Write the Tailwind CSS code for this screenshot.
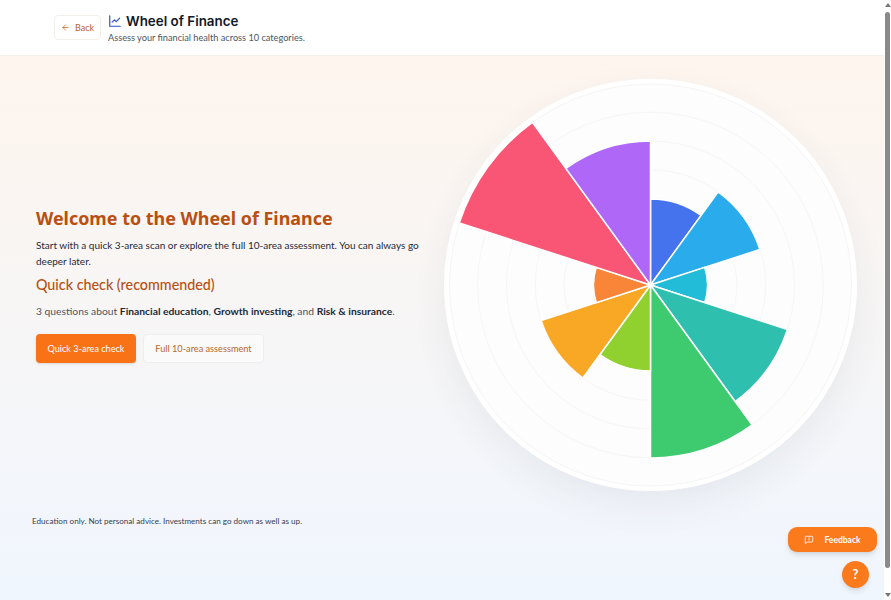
<!DOCTYPE html>
<html lang="en">
<head>
    <meta charset="UTF-8">
    <meta name="viewport" content="width=device-width, initial-scale=1.0">
    <title>Wheel of Finance</title>
    <script src="https://cdn.jsdelivr.net/npm/@tailwindcss/browser@4"></script>
</head>
<body class="relative h-[600px] overflow-hidden bg-gradient-to-b from-[#fff5ec] to-[#f0f6fe] font-['Lato',sans-serif] text-[#111827]">
    <!-- Header -->
    <header class="flex h-[56px] items-start gap-[7px] border-b border-[#f3efe9] bg-white pl-[54px] pt-[13px]">
        <button class="mt-[2px] flex h-[25px] w-[47px] items-center justify-center gap-[5px] rounded-[4px] border border-[#f3f0ec] bg-white text-[9px] text-[#c2601f]">
            <svg class="h-[9px] w-[9px]" viewBox="0 0 24 24" fill="none" stroke="currentColor" stroke-width="2" stroke-linecap="round" stroke-linejoin="round"><path d="M19 12H5M12 19l-7-7 7-7"/></svg>
            Back
        </button>
        <div>
            <div class="flex items-center gap-[4px]">
                <svg class="h-[14px] w-[14px] text-[#2f4fc4]" viewBox="0 0 24 24" fill="none" stroke="currentColor" stroke-width="2" stroke-linecap="round" stroke-linejoin="round"><path d="M3 3v18h18"/><path d="M7 14l4-4 3 3 6-6"/></svg>
                <h1 class="font-['Inter',sans-serif] text-[13.4px] leading-[16px] font-semibold text-[#111827]">Wheel of Finance</h1>
            </div>
            <p class="mt-[2px] text-[9.2px] leading-[13px] text-[#4b5563]">Assess your financial health across 10 categories.</p>
        </div>
    </header>

    <main>
        <!-- Hero -->
        <section class="flex h-[457px] items-center">
            <div class="w-[444px] shrink-0 pl-[36px] pr-[20px]">
                <h2 class="font-['Noto_Sans',sans-serif] text-[17.9px] leading-[24px] font-bold text-[#b94f10]">Welcome to the Wheel of Finance</h2>
                <p class="mt-[7px] text-[10px] leading-[16px] text-[#1f2937]">Start with a quick 3-area scan or explore the full 10-area assessment. You can always go deeper later.</p>
                <h3 class="mt-[6px] text-[14.3px] leading-[20px] font-medium text-[#b94f10]">Quick check (recommended)</h3>
                <p class="mt-[8px] text-[10.3px] leading-[16px] text-[#4b5563]">3 questions about <strong class="font-bold text-[#1f2937]">Financial education</strong>, <strong class="font-bold text-[#1f2937]">Growth investing</strong>, and <strong class="font-bold text-[#1f2937]">Risk &amp; insurance</strong>.</p>
                <div class="mt-[15px] flex gap-[7px]">
                    <button class="h-[29px] w-[100px] rounded-[4px] bg-[#f97316] text-[9.1px] text-white shadow-sm">Quick 3-area check</button>
                    <button class="h-[29px] w-[121px] rounded-[4px] border border-[#eeeeee] bg-[#fbfafa] text-[9.2px] text-[#b9662a]">Full 10-area assessment</button>
                </div>
            </div>
            <div class="h-[412px] w-[413px] shrink-0 rounded-full bg-white shadow-[0_14px_36px_rgba(60,70,90,0.07)]">
                <svg id="wheel" class="h-[412px] w-[413px]" viewBox="-206.5 -206 413 412"></svg>
            </div>
        </section>
        <p class="pl-[32px] pt-[2px] text-[8.1px] leading-[12px] text-[#374151]">Education only. Not personal advice. Investments can go down as well as up.</p>
    </main>

    <!-- Floating buttons -->
    <button class="absolute left-[788px] top-[527px] flex h-[25px] w-[89px] items-center justify-center gap-[10px] rounded-[9px] bg-[#fb7a1c] pt-[1px] text-[8.5px] font-bold text-white shadow-md">
        <svg class="h-[10px] w-[10px]" viewBox="0 0 24 24" fill="none" stroke="currentColor" stroke-width="2" stroke-linecap="round" stroke-linejoin="round"><path d="M21 15a2 2 0 0 1-2 2H8l-5 4V5a2 2 0 0 1 2-2h14a2 2 0 0 1 2 2z"/><path d="M12 7v4M12 14v.01"/></svg>
        Feedback
    </button>
    <button class="absolute left-[842px] top-[561px] h-[27px] w-[27px] rounded-full bg-[#fb7a1c] text-[13px] font-bold text-white shadow-md">?</button>

    <!-- Browser scrollbar -->
    <div class="absolute right-0 top-0 flex h-[600px] w-[7px] flex-col items-center bg-white">
        <div class="mt-[3px] h-0 w-0 border-x-[3px] border-b-[4px] border-x-transparent border-b-[#777777]"></div>
        <div class="mt-[5px] h-[556px] w-[5px] rounded-full bg-[#8a8a8a]"></div>
        <div class="mt-[25px] h-0 w-0 border-x-[3px] border-t-[4px] border-x-transparent border-t-[#777777]"></div>
    </div>

    <script>
        // Wheel segments, clockwise from the top
        const segments = [
            { r: 86, fill: '#4573ee' },
            { r: 115, fill: '#2aabec' },
            { r: 57, fill: '#22bcd8' },
            { r: 144, fill: '#2ebfae' },
            { r: 173, fill: '#3ecb70' },
            { r: 86, fill: '#90d02f' },
            { r: 115, fill: '#f9a826' },
            { r: 57, fill: '#f98538' },
            { r: 201, fill: '#f95574' },
            { r: 144, fill: '#ae67f7' }
        ];

        const wheel = document.getElementById('wheel');
        const point = (r, deg) => {
            const a = deg * Math.PI / 180;
            return `${(r * Math.sin(a)).toFixed(2)} ${(-r * Math.cos(a)).toFixed(2)}`;
        };

        let svg = '<circle r="205" fill="#ffffff"/><circle r="201" fill="#fdfdfd" stroke="#f5f5f5"/>';
        for (let k = 6; k >= 1; k--) {
            svg += `<circle r="${k * 28.8}" fill="none" stroke="#f6f6f6"/>`;
        }
        segments.forEach((s, i) => {
            const start = i * 36, end = start + 36;
            svg += `<path d="M0 0L${point(s.r, start)}A${s.r} ${s.r} 0 0 1 ${point(s.r, end)}Z" fill="${s.fill}" stroke="#ffffff" stroke-width="1.5"/>`;
        });
        wheel.innerHTML = svg;
    </script>
</body>
</html>
